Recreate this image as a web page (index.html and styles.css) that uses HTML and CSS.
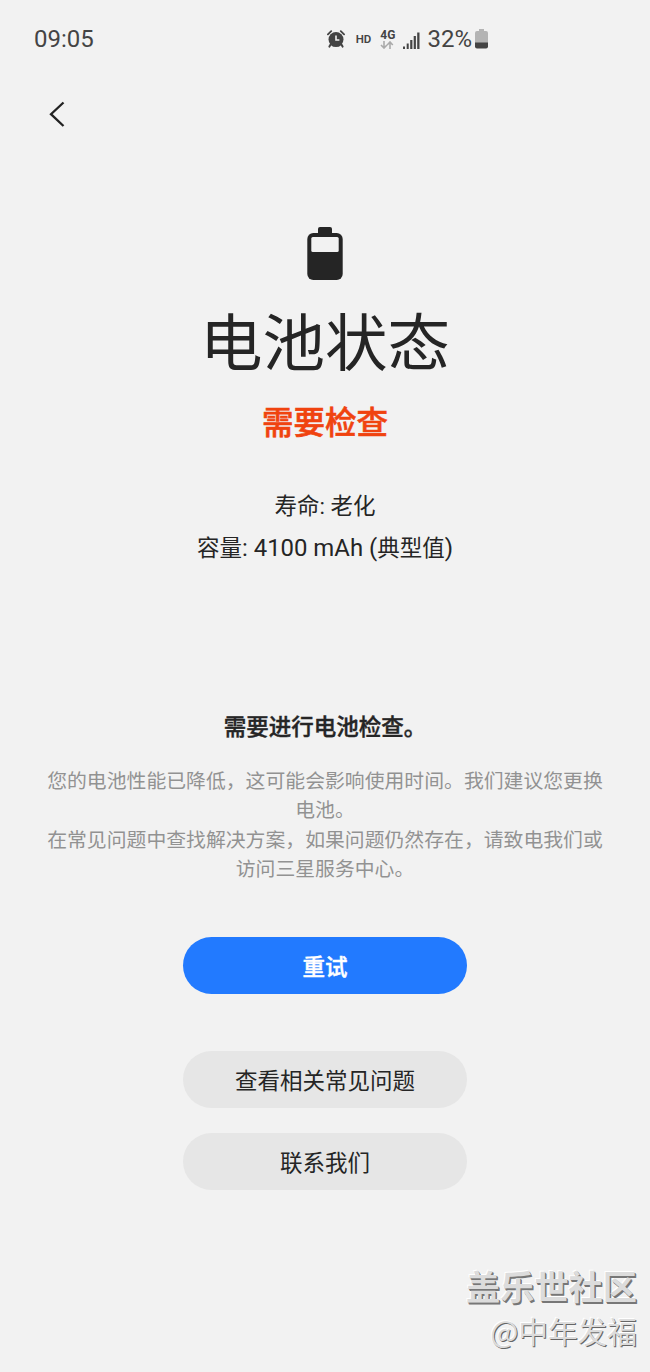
FILE: index.html
```html
<!DOCTYPE html>
<html lang="zh-CN">
<head>
  <meta charset="UTF-8" />
  <meta name="viewport" content="width=device-width, initial-scale=1.0" />
  <title>电池状态</title>
  <link rel="stylesheet" href="styles.css">
</head>
<body>

  <!-- Status bar -->
  <header class="status-bar">
    <span class="clock">09:05</span>
    <div class="status-icons">
      <svg class="alarm" width="18" height="18" viewBox="0 0 18 18">
        <path d="M0.9 4.3L4.2 1.2M17.1 4.3L13.8 1.2" stroke="#444" stroke-width="1.8" stroke-linecap="round" />
        <path d="M3.6 14.5L2.4 16.6M14.4 14.5L15.6 16.6" stroke="#444" stroke-width="2" stroke-linecap="round" />
        <circle cx="9" cy="9.6" r="7.5" fill="#444" />
        <path d="M9 5.4V10H12.4" fill="none" stroke="#f2f2f2" stroke-width="1.6" />
      </svg>
      <span class="hd">HD</span>
      <div class="network">
        <span>4G</span>
        <svg width="14" height="8" viewBox="0 0 14 8">
          <path d="M4 0V6.5M1 4L4 7L7 4M10 8V1.5M7.2 4L10 1L12.8 4" fill="none" stroke="#aaa" stroke-width="1.6" />
        </svg>
      </div>
      <svg class="signal" width="17" height="17" viewBox="0 0 17 17" fill="#444">
        <rect x="0" y="14.5" width="2" height="2.5" />
        <rect x="3.7" y="11.5" width="2" height="5.5" />
        <rect x="7.2" y="8" width="2.2" height="9" />
        <rect x="10.7" y="4" width="2.2" height="13" />
        <rect x="14.2" y="0.5" width="2.3" height="16.5" />
      </svg>
      <span class="percent">32%</span>
      <svg class="level" width="13" height="20" viewBox="0 0 13 20">
        <path d="M4 0H9V2H11A2 2 0 0 1 13 4V14H0V4A2 2 0 0 1 2 2H4Z" fill="#b4b4b4" />
        <path d="M0 13.5H13V17.5A2 2 0 0 1 11 19.5H2A2 2 0 0 1 0 17.5Z" fill="#444" />
      </svg>
    </div>
  </header>

  <nav class="toolbar">
    <svg width="18" height="28" viewBox="0 0 18 28">
      <path d="M15.5 2.5L3 14.2L15.5 26" fill="none" stroke="#222" stroke-width="2.3" />
    </svg>
  </nav>

  <main class="content">
    <svg class="battery" width="36" height="54" viewBox="0 0 36 54">
      <path d="M11 8V2Q11 0 13 0H23Q25 0 25 2V8Z" fill="#252525" />
      <rect x="0.3" y="6" width="35.4" height="47" rx="6" fill="#252525" />
      <rect x="4.3" y="10" width="27.4" height="15" rx="1.5" fill="#f2f2f2" />
    </svg>
    <h1>电池状态</h1>
    <p class="state">需要检查</p>

    <div class="info">
      <p>寿命: 老化</p>
      <p>容量<span class="latin">: 4100 mAh (</span>典型值<span class="latin">)</span></p>
    </div>

    <h2>需要进行电池检查。</h2>
    <p class="description">
      您的电池性能已降低，这可能会影响使用时间。我们建议您更换<br>电池。<br>
      在常见问题中查找解决方案，如果问题仍然存在，请致电我们或<br>访问三星服务中心。
    </p>

    <div class="actions">
      <button class="btn primary">重试</button>
      <button class="btn">查看相关常见问题</button>
      <button class="btn">联系我们</button>
    </div>
  </main>

  <!-- Community watermark -->
  <footer class="watermark">
    <div class="community">盖乐世社区</div>
    <div class="author">@中年发福</div>
  </footer>

</body>
</html>
```
FILE: styles.css
```css
* {
  box-sizing: border-box;
}

body {
  margin: 0;
  height: 1372px;
  background: #f2f2f2;
  color: #252525;
  font-family: Roboto, 'Noto Sans CJK SC', sans-serif;
  display: flex;
  flex-direction: column;
  overflow: hidden;
}

h1, h2, p {
  margin: 0;
}

svg {
  display: block;
  flex: none;
}

.status-bar {
  height: 78px;
  padding: 0 162px 0 34px;
  display: flex;
  justify-content: space-between;
  align-items: center;
  color: #444;
}

.clock {
  font-size: 24px;
}

.status-icons {
  display: flex;
  align-items: center;
}

.hd {
  margin-left: 11px;
  font-size: 11.5px;
  font-weight: 600;
}

.network {
  margin-left: 9px;
  font-size: 12px;
  font-weight: 700;
  line-height: 12px;
}

.signal {
  margin-left: 8px;
  margin-top: 3px;
}

.percent {
  margin-left: 7px;
  font-size: 24px;
}

.level {
  margin-left: 3px;
}

.toolbar {
  height: 149px;
  padding: 22px 0 0 48px;
}

.content {
  display: flex;
  flex-direction: column;
  align-items: center;
  text-align: center;
}

h1 {
  margin-top: 19px;
  font-size: 62.5px;
  font-weight: 400;
  line-height: 90px;
}

.state {
  margin-top: 14px;
  font-size: 31.5px;
  font-weight: 500;
  line-height: 40px;
  color: #f0430f;
  -webkit-text-stroke: 0.6px #f0430f;
}

.info {
  margin-top: 41px;
  font-size: 22.5px;
  line-height: 42px;
}

.info .latin {
  font-size: 23.9px;
}

h2 {
  margin-top: 142px;
  font-size: 22.5px;
  font-weight: 500;
  line-height: 32px;
  -webkit-text-stroke: 0.4px #252525;
}

.description {
  margin-top: 24px;
  font-size: 19.85px;
  line-height: 29.3px;
  color: #929292;
  white-space: nowrap;
}

.actions {
  margin-top: 53px;
  display: flex;
  flex-direction: column;
  gap: 25px;
}

.btn {
  width: 284px;
  height: 57px;
  padding: 0 0 2px;
  border: none;
  border-radius: 29px;
  background: #e6e6e6;
  color: #252525;
  font-family: inherit;
  font-size: 22.5px;
}

.btn.primary {
  margin-bottom: 32px;
  background: #227aff;
  color: #fff;
  font-weight: 500;
  -webkit-text-stroke: 0.4px #fff;
}

.watermark {
  margin-top: auto;
  padding: 0 13px 18px 0;
  text-align: right;
  color: #dcdcdc;
  font-family: 'Noto Sans CJK SC', sans-serif;
}

.community {
  font-size: 34.2px;
  font-weight: 700;
  line-height: 46px;
  text-shadow: 1px 1px 0 #777, 1.5px 2px 0 #777, -1px -1px 0 #fff;
}

.author {
  font-size: 29.7px;
  line-height: 46px;
  text-shadow: 1px 1px 0 #666, -1px -1px 0 #fff;
}
```
